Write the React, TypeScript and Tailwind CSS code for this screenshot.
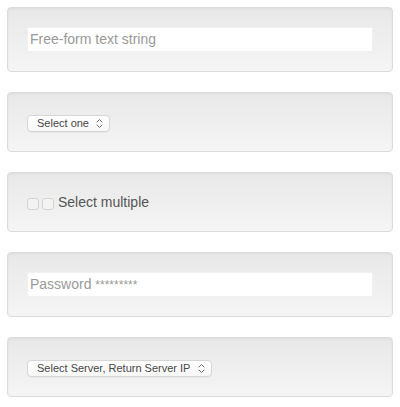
import React from "react";

const Chevrons = () => (
  <svg width="7" height="11" viewBox="0 0 7 11" className="shrink-0">
    <path d="M1 4 L3.5 1.5 L6 4" fill="none" stroke="#6b6b6b" strokeWidth="1" strokeLinecap="round" strokeLinejoin="round" />
    <path d="M1 7 L3.5 9.5 L6 7" fill="none" stroke="#6b6b6b" strokeWidth="1" strokeLinecap="round" strokeLinejoin="round" />
  </svg>
);

const Well = ({ children, tall }: { children: React.ReactNode; tall?: boolean }) => (
  <div
    className={`rounded-[4px] border border-[#dcdcdc] bg-[linear-gradient(to_bottom,#e8e8e8_0%,#f5f5f5_100%)] shadow-[inset_0_1px_3px_rgba(0,0,0,0.05),0_1px_0_rgba(255,255,255,0.1)] p-[19px] ${tall ? "h-[65px]" : "h-[60px]"}`}
  >
    {children}
  </div>
);

const FakeSelect = ({ label, width }: { label: string; width: string }) => (
  <div className="h-5 flex items-center pt-[2px]">
    <div
      className={`${width} h-[17px] flex items-center justify-between pl-[9px] pr-[6px] rounded-[4px] border border-[#d6d6d6] bg-[linear-gradient(to_bottom,#ffffff,#f7f7f7)] text-[11px] text-[#474747] leading-none shadow-[0_1px_0_rgba(0,0,0,0.03)]`}
    >
      <span>{label}</span>
      <Chevrons />
    </div>
  </div>
);

export default function App() {
  return (
    <div className="px-[7px] pt-[7px] flex flex-col gap-5 bg-white min-h-[407px]" style={{ fontFamily: '"Liberation Sans", Arial, sans-serif' }}>
      <Well tall>
        <div className="h-[25px] w-[346px] bg-white border border-[#f0f0f0] flex items-center pl-[2px] text-[14px] text-[#9a9a9a]">
          Free-form text string
        </div>
      </Well>
      <Well>
        <FakeSelect label="Select one" width="w-[83px]" />
      </Well>
      <Well>
        <div className="h-5 flex items-center">
          <div className="w-3 h-3 rounded-[3px] border border-[#d4d4d4] bg-[#f3f3f3] mt-[4px]" />
          <div className="w-3 h-3 rounded-[3px] border border-[#d4d4d4] bg-[#f3f3f3] mt-[4px] ml-[3px]" />
          <span className="ml-[4px] text-[14px] text-[#555] leading-none">Select multiple</span>
        </div>
      </Well>
      <Well tall>
        <div className="h-[25px] w-[346px] bg-white border border-[#f0f0f0] flex items-center pl-[2px] text-[14px] text-[#9a9a9a]">
          <span>
            Password <span className="text-[12px]">*********</span>
          </span>
        </div>
      </Well>
      <Well>
        <FakeSelect label="Select Server, Return Server IP" width="w-[185px]" />
      </Well>
    </div>
  );
}
